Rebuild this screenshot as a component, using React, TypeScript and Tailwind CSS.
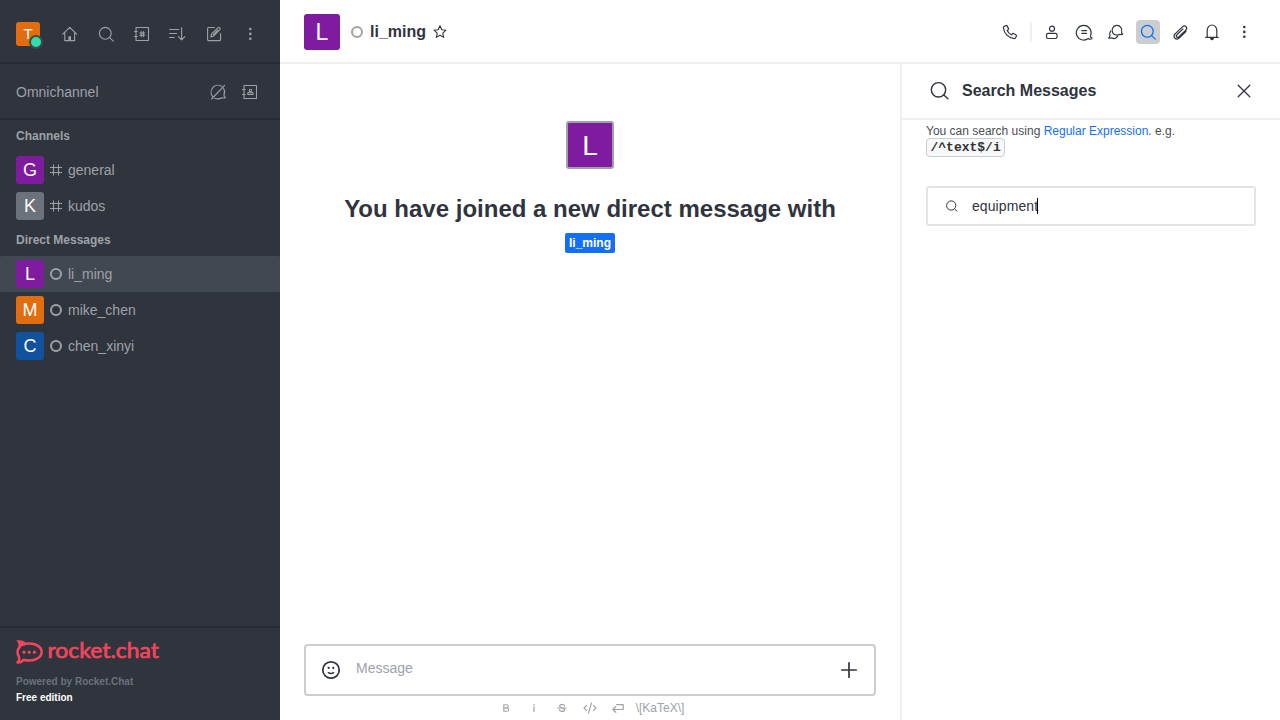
import type { ReactNode } from 'react';

function Icon({ children, w = 1.1, className = '' }: { children: ReactNode; w?: number; className?: string }) {
  return (
    <svg
      width="24"
      height="24"
      viewBox="0 0 24 24"
      fill="none"
      stroke="currentColor"
      strokeWidth={w}
      strokeLinecap="round"
      strokeLinejoin="round"
      className={`shrink-0 ${className}`}
    >
      {children}
    </svg>
  );
}

const Kebab = () => (
  <Icon>
    <g fill="currentColor" stroke="none">
      <circle cx="12.3" cy="7" r="1.3" />
      <circle cx="12.3" cy="11.9" r="1.3" />
      <circle cx="12.3" cy="16.8" r="1.3" />
    </g>
  </Icon>
);

const Search = ({ w = 1.1 }: { w?: number }) => (
  <Icon w={w}>
    <circle cx="11.3" cy="11.3" r="5.9" />
    <path d="M15.6 15.6l3.7 3.5" />
  </Icon>
);

const Book = ({ children }: { children: ReactNode }) => (
  <Icon>
    <rect x="6" y="5.5" width="12.5" height="13" rx=".3" />
    <path d="M4.6 9.500h2.600M4.600 14.500h2.600" />
    {children}
  </Icon>
);

const Ring = ({ className = '' }: { className?: string }) => (
  <span className={`size-3 shrink-0 rounded-full border-2 border-[#9ea2a8] ${className}`} />
);

function Avatar({ letter, color }: { letter: string; color: string }) {
  return (
    <div className={`flex size-7 shrink-0 items-center justify-center rounded-[3px] text-[18px] leading-7 text-white ${color}`}>
      {letter}
    </div>
  );
}

function Row({ letter, color, name, channel, active }: { letter: string; color: string; name: string; channel?: boolean; active?: boolean }) {
  return (
    <div className={`flex h-9 items-center rounded-[2px] pl-4 ${active ? 'bg-[#414852]' : ''}`}>
      <Avatar letter={letter} color={color} />
      <div className="mx-1.5 flex w-3 items-center justify-center">
        {channel ? (
          <svg width="12" height="12" viewBox="0 0 12 12" fill="none" stroke="currentColor" strokeWidth="1.1">
            <path d="M3.500 .5v11M8.500 .5v11M0 3.500h12M0 8.500h12" />
          </svg>
        ) : (
          <Ring />
        )}
      </div>
      <span className="text-sm">{name}</span>
    </div>
  );
}

function Sidebar() {
  return (
    <aside className="flex w-[280px] shrink-0 flex-col bg-[#2f343d] text-[#9ea2a8]">
      <div className="flex h-16 items-center border-b-2 border-[#272b33] pt-1.5 pl-4">
        <div className="relative mr-[18px] flex size-6 items-center justify-center rounded-[3px] bg-[#e26d0e] text-[15px] text-white">
          T
          <span className="absolute -right-[3px] -bottom-[3px] size-3.5 rounded-full border-2 border-[#414852] bg-[#2de0a5]" />
        </div>
        <div className="flex gap-3">
          <Icon>
            <path d="M4.700 12.200l7-6.800 7 6.800M6.800 10.300v8.300h9.800v-8.300" />
            <path d="M10.400 18.400v-4.200h2.600v4.200z" fill="currentColor" stroke="none" />
          </Icon>
          <Search />
          <Book>
            <path d="M11.200 9.600v5M13.400 9.600v5M9.800 11h5M9.800 13.200h5" />
          </Book>
          <Icon>
            <path d="M3.600 7.500h9.200M3.600 11.500h7M3.600 15.500h4.600M15.600 5.800v12M12.400 14.700l3.200 3.200 3.200-3.200" />
          </Icon>
          <Icon>
            <path d="M12.400 5.500H6.600q-1 0-1 1v11.100q0 1 1 1h11q1 0 1-1V11.500" />
            <path d="M8.800 15l.8-3.100 6.300-6.100q1-.9 1.900 0t0 1.900l-6.200 6.300zM11.200 12.600l4.400-4.400" />
          </Icon>
          <Kebab />
        </div>
      </div>
      <div className="flex h-14 items-center border-b-2 border-[#272b33] pt-0.5 pr-[18px] pl-4">
        <span className="flex-1 text-sm">Omnichannel</span>
        <div className="flex gap-2">
          <Icon>
            <path d="M5.600 19l13-13.600M6.600 16.500A6.900 6.900 0 0 1 15.600 6.300M17.500 8.200c1.300 2 1.300 4.600.5 6.600-.2 1.200.2 2.100 1.500 2.700-1 .7-2.200.7-3.500.2-2.400 1.400-5 1.500-7.300.5" />
          </Icon>
          <Book>
            <circle cx="12.400" cy="10.400" r="1.200" />
            <path d="M9.800 14.400v-1.200q0-1 1-1h3.200q1 0 1 1v1.200z" />
          </Book>
        </div>
      </div>
      <div className="flex h-8 items-center pl-4 text-xs font-bold">Channels</div>
      <Row letter="G" color="bg-[#7f1b9f]" name="general" channel />
      <Row letter="K" color="bg-[#6c727a]" name="kudos" channel />
      <div className="flex h-8 items-center pl-4 text-xs font-bold">Direct Messages</div>
      <Row letter="L" color="bg-[#7f1b9f]" name="li_ming" active />
      <Row letter="M" color="bg-[#e26d0e]" name="mike_chen" />
      <Row letter="C" color="bg-[#10529e]" name="chen_xinyi" />
      <div className="mt-auto h-[94px] border-t-2 border-[#272b33] px-4 pt-3">
        <div className="flex h-6 text-[#f5455c]">
          <svg width="28" height="24" viewBox="0 0 28 24" className="block shrink-0">
            <path
              d="M7.500 4.200C16 1.800 25.700 5.500 25.700 12S16 22.200 7.500 19.800C6 21.800 3.600 22.700 1.500 22.500C3.600 20.500 3.700 18.500 2.700 16.300C1.100 13.600 1.300 10.600 2.700 8"
              fill="none"
              stroke="currentColor"
              strokeWidth="2.500"
              strokeLinejoin="round"
            />
            <path d="M.200 .6C4.500-.5 8.200 .8 10 3L9 5.300C6.500 5.900 4.800 7 3.700 9.200L1.600 8.500C3.200 5.300 2.600 2.700 .200 .6z" fill="currentColor" />
            <g fill="currentColor">
              <circle cx="8" cy="12.200" r="1.600" />
              <circle cx="13.200" cy="12.200" r="1.600" />
              <circle cx="18.400" cy="12.200" r="1.600" />
            </g>
          </svg>
          <svg width="118" height="32" viewBox="0 0 118 32" className="block shrink-0 overflow-visible">
            <text
              x="3.500"
              y="18"
              textLength="111.500"
              lengthAdjust="spacingAndGlyphs"
              fill="currentColor"
              stroke="currentColor"
              strokeWidth="0.700"
              className="font-['Lato',sans-serif] text-[22px] leading-none font-normal"
            >
              rocket.chat
            </text>
          </svg>
        </div>
        <div className="mt-[10px] text-[10px] leading-4 font-bold text-[#6c727a]">Powered by Rocket.Chat</div>
        <div className="text-[10px] leading-4 font-bold text-white">Free edition</div>
      </div>
    </aside>
  );
}

function RoomHeader() {
  return (
    <header className="flex h-16 shrink-0 items-center border-b-2 border-[#eeeff1] px-6 pt-0.5">
      <div className="flex size-9 items-center justify-center rounded-[3px] bg-[#7f1b9f] text-[23px] text-white">L</div>
      <Ring className="mr-[7px] ml-[11px]" />
      <h1 className="text-base font-bold">li_ming</h1>
      <Icon className="ml-0.5">
        <path d="M12 5.800l1.800 4 4.200.4-3.200 2.900.9 4.300-3.700-2.200-3.700 2.200.9-4.300-3.200-2.900 4.200-.4z" />
      </Icon>
      <div className="ml-auto flex items-center gap-2">
        <Icon w={1.200}>
          <path d="M6 6.600L8 5.500q.7-.3 1.100.4l1.300 2.500q.4.800-.3 1.400l-.9.8q1.300 2.800 4.200 4.200l.8-1q.6-.7 1.400-.3l2.500 1.400q.7.4.4 1.100l-1.100 2q-.4.700-1.200.6C10.500 18 6 13.500 5.400 7.800q-.1-.8.600-1.200z" />
        </Icon>
        <span className="h-5 w-0.5 bg-[#eeeff1]" />
        <Icon w={1.200}>
          <circle cx="12" cy="8.700" r="2.500" />
          <rect x="6.500" y="13.400" width="10.600" height="5.100" rx="1.700" />
        </Icon>
        <Icon w={1.200}>
          <path d="M20 18.100c-1.300-.4-1.900-1.400-1.300-2.900A7.400 7.300 0 1 0 16.300 18.500c1.200 1.100 2.700 1 3.700-.4zM9.800 10.600h4.800M9.800 13.300h4.800" />
        </Icon>
        <Icon w={1.200}>
          <path d="M8.600 12.600A4.900 4.900 0 1 1 17.600 11.900c-.2 1 .2 1.700 1.200 2.200-1 .7-1.900.7-2.900.2-2.200 1.400-5.700 1-7.300-1.700zM6.600 11.200c-1.100 1.400-1.200 2.900-.6 4.400 0 1-.5 1.700-1.400 2.300 1 .5 2.100.4 3-.1 2 1.100 4.600.8 6-1.400" />
        </Icon>
        <span className="flex size-6 rounded bg-[#cbced1] text-[#156ff5]">
          <Search w={1.300} />
        </span>
        <Icon w={1.200}>
          <path d="M17.900 11.500L11.100 18q-2.300 2-4.200.2t.2-4.300l7.300-7q2-1.800 3.600-.2t-.2 3.600l-6.800 6.500q-1.300 1.100-2.300.2t.2-2.300l6-5.800" />
        </Icon>
        <Icon w={1.200}>
          <path d="M5.600 17.300h12.600M7.200 17v-6.600a4.800 5.400 0 0 1 9.600 0V17" />
          <path d="M10.600 18.700h2.800l-1.400 1z" fill="currentColor" />
        </Icon>
        <Kebab />
      </div>
    </header>
  );
}

function Conversation() {
  return (
    <main className="flex min-w-0 flex-1 flex-col px-6">
      <div className="flex flex-1 flex-col items-center pt-[57px]">
        <div className="flex size-12 items-center justify-center rounded-[3px] border-2 border-[#9ea2a8] bg-[#7f1b9f] pt-0.5 text-[28px] text-white">L</div>
        <h2 className="mt-6 text-2xl leading-8 font-bold">You have joined a new direct message with</h2>
        <span className="mt-2 h-5 rounded-[2px] bg-[#156ff5] px-1 text-xs leading-5 font-bold text-white">li_ming</span>
      </div>
      <div className="flex h-[52px] items-center rounded border-2 border-[#cbced1] px-[13px]">
        <Icon w={1.700}>
          <circle cx="12" cy="12" r="8.200" />
          <path d="M9.400 14.700q2.600 1.700 5.200 0" strokeWidth="1.500" />
          <g fill="currentColor" stroke="none">
            <circle cx="9.700" cy="9.900" r="1.100" />
            <circle cx="14.300" cy="9.900" r="1.100" />
          </g>
        </Icon>
        <span className="ml-[13px] flex-1 pb-1 text-sm text-[#9ea2a8]">Message</span>
        <Icon w={1.700}>
          <path d="M4.800 12h14.400M12 4.800v14.400" />
        </Icon>
      </div>
      <div className="flex h-6 items-center justify-center gap-1 pr-0.5 text-[#9ea2a8]">
        <Icon w={1.100}>
          <path d="M9.800 8.700h2.700q1.800 0 1.800 1.500T12.500 11.900H9.800zM9.800 11.900h3q1.900 0 1.900 1.700T12.800 15.200H9.800z" />
        </Icon>
        <Icon w={1.300}>
          <path d="M12 11v4.300M12 8.500v.3" />
        </Icon>
        <Icon w={1.200}>
          <path d="M14.500 9.800q-.5-1.400-2.500-1.400t-2.400 1.500q0 1.200 2.400 1.900t2.700 1.800q-.2 1.800-2.600 1.800t-2.800-1.600M7.900 12h8.200" />
        </Icon>
        <Icon w={1.100}>
          <path d="M8.600 9.300L6 12l2.600 2.700M15.400 9.300L18 12l-2.600 2.700M13.500 7l-3 10" />
        </Icon>
        <Icon w={1.200}>
          <path d="M9.800 10.700L6.900 13.500l2.900 2.800M7 13.500h10.200V8.700h-6.500" />
        </Icon>
        <span className="ml-0.5 text-xs">\[KaTeX\]</span>
      </div>
    </main>
  );
}

function SearchPanel() {
  return (
    <aside className="w-[380px] shrink-0 border-l-2 border-[#eeeff1]">
      <div className="flex h-14 items-center border-b-2 border-[#eeeff1] pr-6 pl-[26px]">
        <svg width="24" height="24" viewBox="0 0 24 24" fill="none" stroke="currentColor" strokeWidth="1.400" strokeLinecap="round">
          <circle cx="10.500" cy="10.800" r="7.200" />
          <path d="M15.800 15.900l4.200 3.900" />
        </svg>
        <h3 className="ml-2.5 flex-1 text-base font-bold">Search Messages</h3>
        <Icon w={1.300}>
          <path d="M6.200 6.200l11.600 11.600M17.800 6.200L6.200 17.800" />
        </Icon>
      </div>
      <div className="px-6 pt-[3px]">
        <p className="h-8 text-xs leading-4 text-[#4a4e55]">
          You can search using <a className="text-[#156ff5]">Regular Expression</a>. e.g.
          <br />
          <code className="rounded border border-[#cbced1] bg-[#f7f8fa] px-[3.500px] py-px font-['Liberation_Mono',monospace] text-[13px] font-bold text-[#333]">/^text$/i</code>
        </p>
        <div className="mt-[31px] flex h-10 items-center rounded-[3px] border-2 border-[#e1e5e8] pl-[18px]">
          <svg width="12" height="12" viewBox="0 0 12 12" fill="none" stroke="currentColor" strokeWidth="1">
            <circle cx="5.200" cy="5.500" r="4.600" />
            <path d="M8.500 8.800l2.900 2.700" />
          </svg>
          <span className="pl-3.5 text-sm tracking-[0.08px]">equipment</span>
          <span className="-ml-px h-4 w-px bg-black" />
        </div>
      </div>
    </aside>
  );
}

export default function App() {
  return (
    <div className="flex h-[720px] w-[1280px] overflow-hidden bg-white font-['Liberation_Sans',Arial,sans-serif] text-[#2f343d]">
      <Sidebar />
      <div className="flex min-w-0 flex-1 flex-col">
        <RoomHeader />
        <div className="flex min-h-0 flex-1">
          <Conversation />
          <SearchPanel />
        </div>
      </div>
    </div>
  );
}
